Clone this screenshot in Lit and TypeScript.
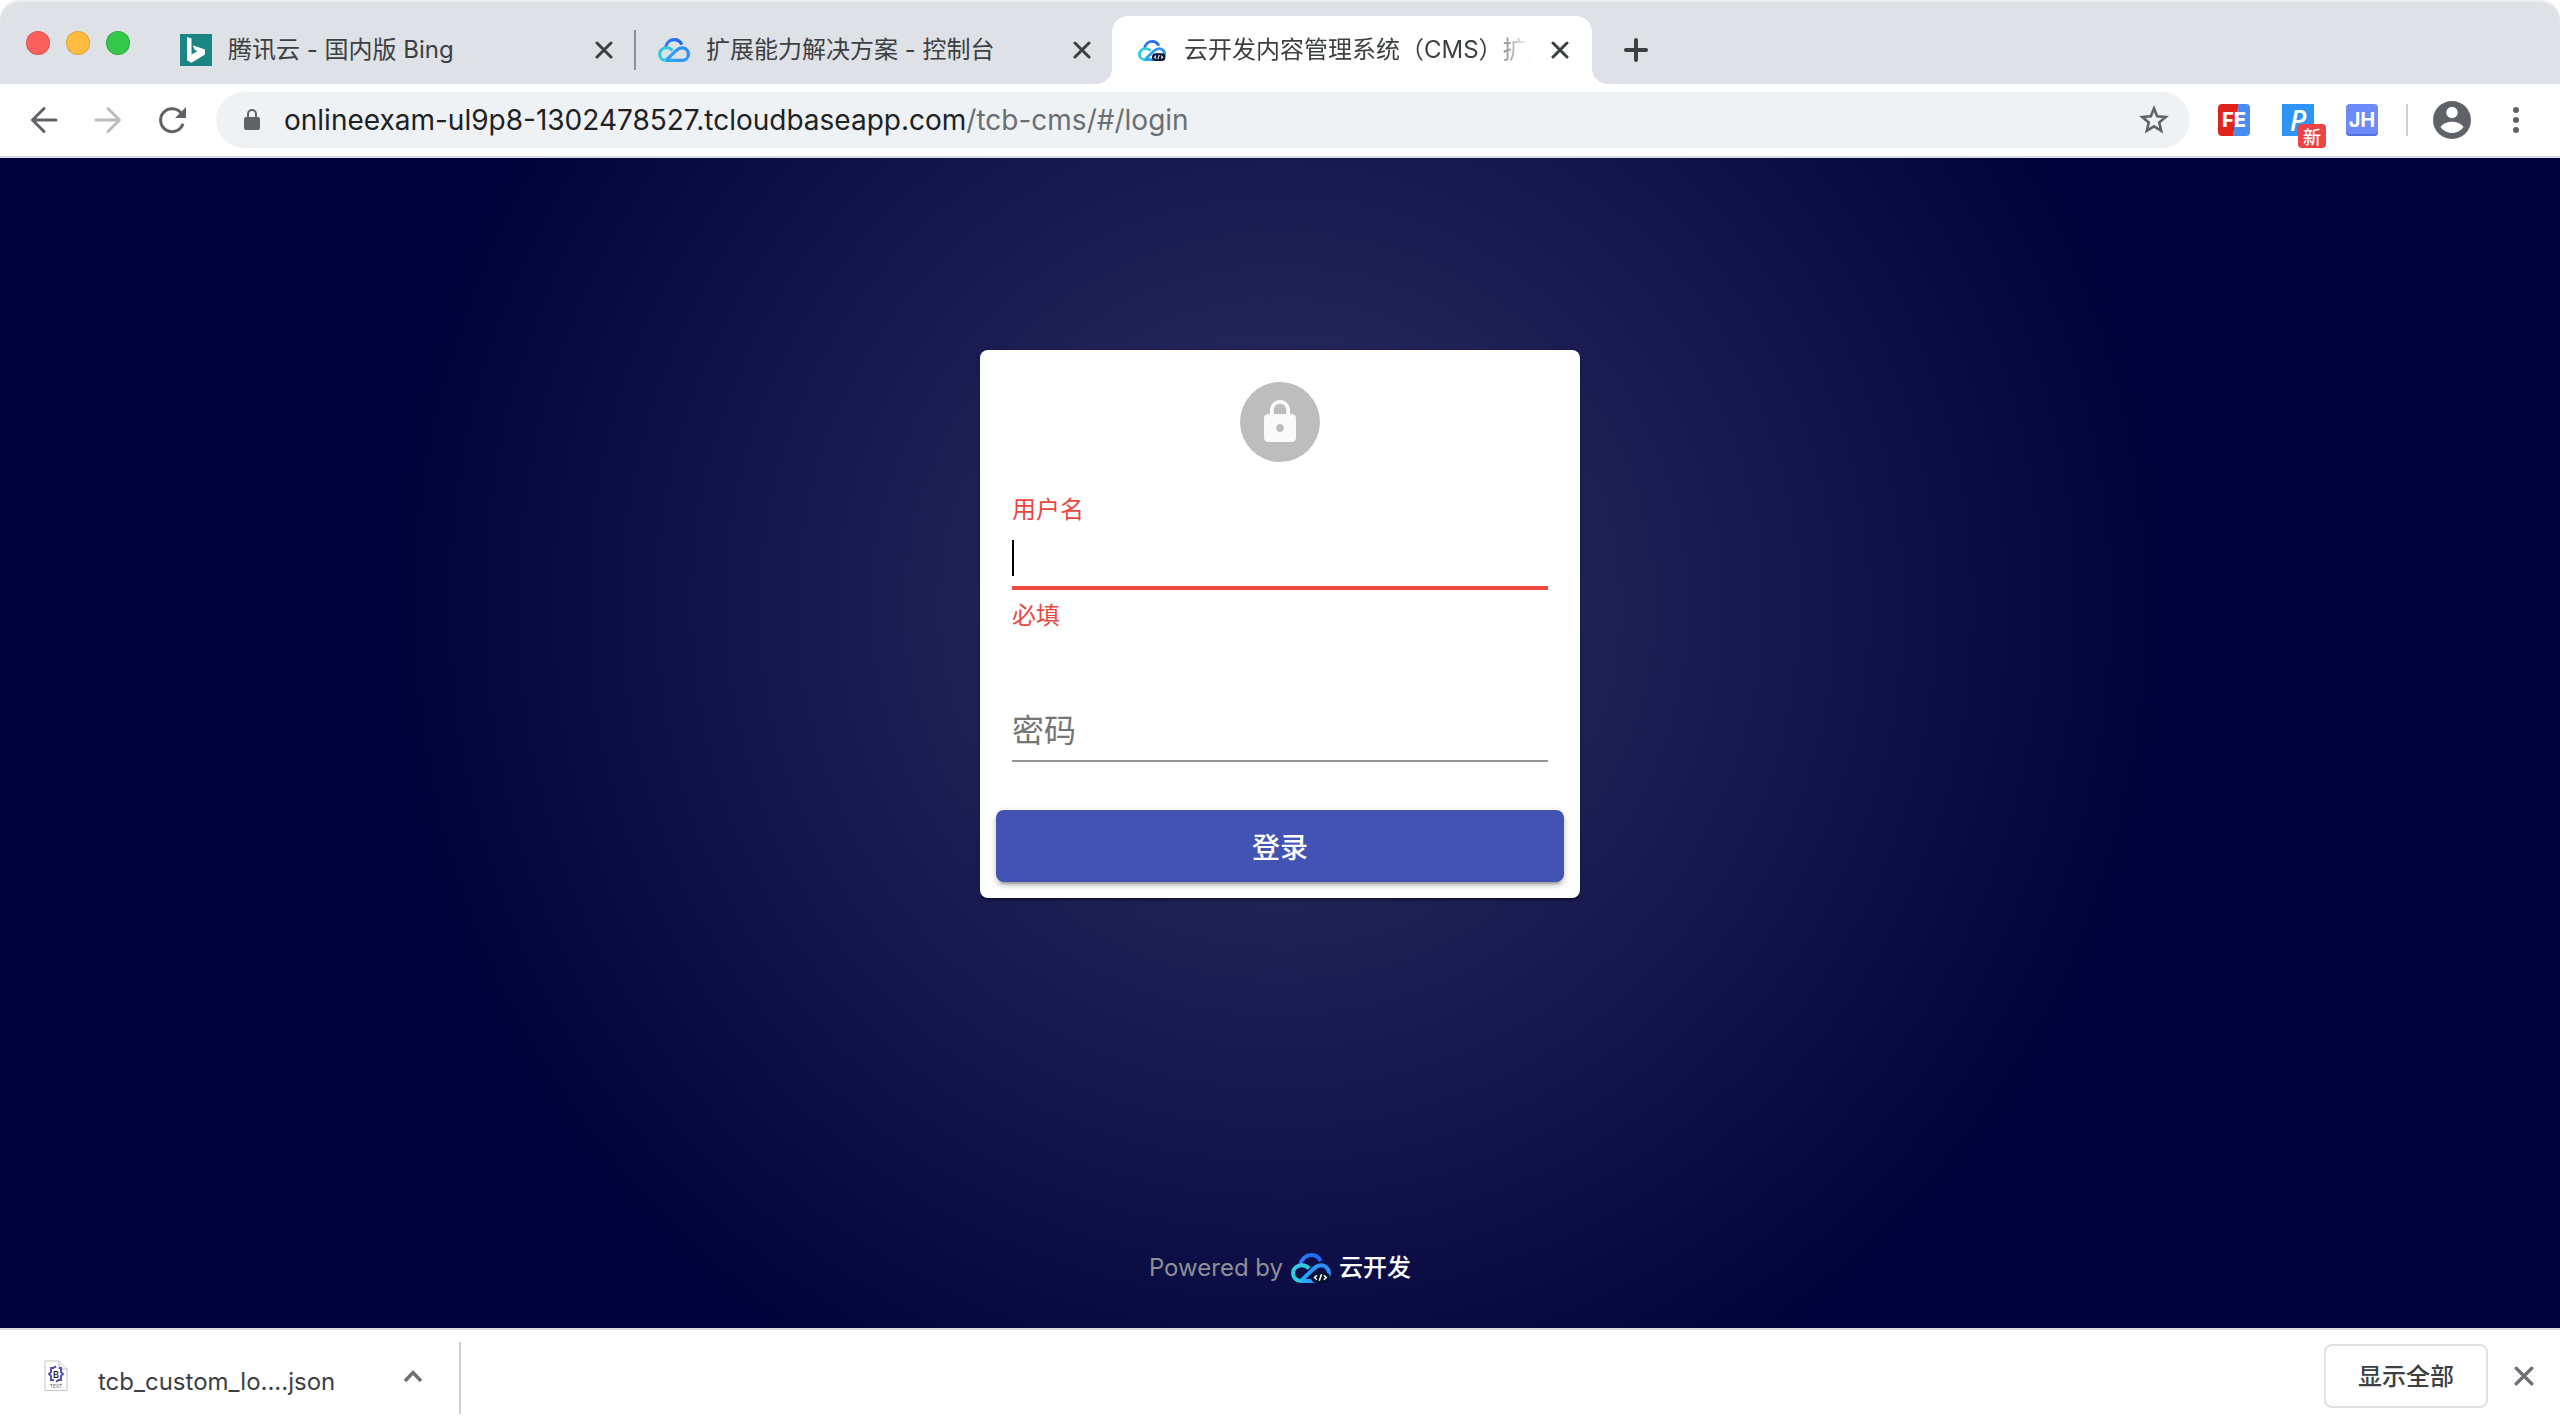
import { LitElement, html, css, svg, nothing } from "lit";
import { customElement, property, state } from "lit/decorators.js";

const cloud = (dev: boolean) => html`<svg viewBox="0 0 40 30" fill="none" aria-hidden="true">
  <defs>
    <linearGradient id="top" x1="8" y1="10" x2="31" y2="10" gradientUnits="userSpaceOnUse">
      <stop stop-color="#2f7bf5" /><stop offset="1" stop-color="#1a66f0" />
    </linearGradient>
    <linearGradient id="left" x1="2" y1="14" x2="16" y2="28" gradientUnits="userSpaceOnUse">
      <stop stop-color="#37c8d8" /><stop offset="1" stop-color="#25d3e4" />
    </linearGradient>
    <linearGradient id="right" x1="38" y1="12" x2="14" y2="28" gradientUnits="userSpaceOnUse">
      <stop stop-color="#2f8bf7" /><stop offset="1" stop-color="#2aa5fb" />
    </linearGradient>
  </defs>
  <path d="M9.5 11.5C10.6 5.6 15.2 2 20.3 2C24.600 2 28 4.400 29.800 8.200" stroke="url(#top)" stroke-width="4" />
  <path d="M18.200 15.400C16.200 13.300 13.600 12.200 10.800 12.200C5.800 12.200 2 15.800 2 20.200C2 24.700 5.600 28 10 28H12" stroke="url(#left)" stroke-width="4" />
  <path d="M10 28H30C34.600 28 38 24.600 38 20.300C38 15.800 34.600 12.300 30.200 12.300C27.300 12.300 25.200 13.400 23 15.400L10.500 27.400" stroke="url(#right)" stroke-width="4" />
  ${dev
    ? svg`<rect x="20" y="19" width="19" height="11" rx="5.500" fill="#04122e" />
      <path d="M26 22.300L23.500 24.500L26 26.700M30.500 21.300L28.300 27.700M32.800 22.300L35.300 24.500L32.800 26.700" stroke="#fff" stroke-width="1.500" />`
    : nothing}
</svg>`;

const bing = html`<svg viewBox="0 0 32 32" aria-hidden="true">
  <rect width="32" height="32" fill="#1b8583" />
  <path fill="#fff" d="M7 3L11.500 4.600V20.600L17.500 17.200L14.600 15.800L12.800 11.300L25 15.600V20.400L11.500 28.800L7 26.200Z" />
</svg>`;

const cross = html`<svg viewBox="0 0 18 18" aria-hidden="true">
  <path d="M2 2L16 16M16 2L2 16" fill="none" stroke="currentColor" stroke-width="3" stroke-linecap="round" />
</svg>`;

@customElement("browser-tab")
class BrowserTab extends LitElement {
  @property() label = "";
  @property() icon = "";
  @property({ type: Boolean, reflect: true }) active = false;
  @property({ type: Boolean, reflect: true }) divided = false;

  static styles = css`
    :host {
      display: flex;
      box-sizing: border-box;
      flex: 0 1 478px;
      min-width: 0;
      height: 68px;
      align-items: center;
      gap: 16px;
      padding: 0 20px 0 24px;
      position: relative;
      color: #3c4043;
    }
    :host([active]) {
      background: #fff;
      border-radius: 16px 16px 0 0;
      flex-basis: 480px;
      padding-right: 22px;
    }
    :host([active])::before,
    :host([active])::after {
      content: "";
      position: absolute;
      bottom: 0;
      width: 16px;
      height: 16px;
    }
    :host([active])::before {
      right: 100%;
      background: radial-gradient(circle at 0 0, transparent 16px, #fff 16px);
    }
    :host([active])::after {
      left: 100%;
      background: radial-gradient(circle at 100% 0, transparent 16px, #fff 16px);
    }
    :host([divided])::after {
      content: "";
      position: absolute;
      left: 100%;
      top: 14px;
      width: 2px;
      height: 40px;
      background: #8d9095;
    }
    .icon {
      display: flex;
      flex: none;
      justify-content: center;
      width: 32px;
    }
    .icon svg {
      width: 100%;
    }
    :host([active]) .icon svg {
      width: 28px;
    }
    .title {
      flex: 1;
      min-width: 0;
      overflow: hidden;
      white-space: nowrap;
      font-size: 24px;
      line-height: 36px;
    }
    :host([active]) .title {
      mask-image: linear-gradient(90deg, #000 calc(100% - 48px), transparent calc(100% - 4px));
    }
    .close {
      display: flex;
      flex: none;
      width: 20px;
      height: 20px;
      padding: 1px;
      border: 0;
      background: none;
      color: inherit;
    }
  `;

  render() {
    return html`
      <span class="icon">${this.icon === "bing" ? bing : cloud(this.icon === "cloud-dev")}</span>
      <span class="title">${this.label}</span>
      <button class="close" aria-label="关闭标签页">${cross}</button>
    `;
  }
}

@customElement("login-card")
class LoginCard extends LitElement {
  @state() private user = "";

  static styles = css`
    :host {
      display: block;
      width: 600px;
      max-width: 100%;
    }
    .card {
      box-sizing: border-box;
      display: flex;
      flex-direction: column;
      padding: 32px 16px 16px;
      background: #fff;
      border-radius: 8px;
      box-shadow: 0 4px 2px -2px #0003, 0 2px 2px #0002, 0 2px 6px #0002;
    }
    .avatar {
      display: flex;
      align-self: center;
      align-items: center;
      justify-content: center;
      width: 80px;
      height: 80px;
      border-radius: 50%;
      background: #bdbdbd;
    }
    .avatar svg {
      width: 48px;
      height: 48px;
      fill: #fafafa;
    }
    .field {
      display: flex;
      flex-direction: column;
      padding: 0 16px;
    }
    .user {
      margin-top: 30px;
      color: #e9473f;
    }
    .label,
    .help {
      font-size: 24px;
      line-height: 36px;
    }
    .help {
      margin: 8px 0 0;
    }
    .input {
      box-sizing: border-box;
      width: 100%;
      height: 58px;
      padding: 0;
      border: 0;
      outline: 0;
      border-radius: 0;
      background: none;
      font: inherit;
      font-size: 32px;
      line-height: 38px;
      color: #212121;
      caret-color: transparent;
    }
    .input::placeholder {
      color: #757575;
      opacity: 1;
    }
    .entry {
      display: flex;
      position: relative;
      border-bottom: 4px solid #ee4a41;
    }
    .caret {
      position: absolute;
      left: 0;
      top: 12px;
      width: 2px;
      height: 36px;
      background: #000;
    }
    .pass {
      margin-top: 66px;
    }
    .pass .input {
      height: 62px;
      border-bottom: 2px solid #949494;
    }
    .submit {
      height: 72px;
      margin-top: 48px;
      border: 0;
      border-radius: 8px;
      background: #4353b3;
      color: #fff;
      font: inherit;
      font-size: 28px;
      font-weight: 500;
      box-shadow: 0 6px 2px -4px #0003, 0 4px 4px #0002, 0 2px 10px #0002;
    }
  `;

  render() {
    return html`<form class="card">
      <span class="avatar">
        <svg viewBox="0 0 24 24" aria-hidden="true">
          <path d="M18 8h-1V6c0-2.760-2.240-5-5-5S7 3.240 7 6v2H6c-1.100 0-2 .9-2 2v10c0 1.100.9 2 2 2h12c1.100 0 2-.9 2-2V10c0-1.100-.9-2-2-2zm-6 9c-1.100 0-2-.9-2-2s.9-2 2-2 2 .9 2 2-.9 2-2 2zm3.100-9H8.900V6c0-1.710 1.390-3.100 3.100-3.100 1.710 0 3.100 1.390 3.100 3.100v2z" />
        </svg>
      </span>
      <div class="field user">
        <label class="label" for="user">用户名</label>
        <div class="entry">
          <input class="input" id="user" type="text" aria-invalid="true" aria-describedby="user-help"
            .value=${this.user} @input=${(e: Event) => (this.user = (e.target as HTMLInputElement).value)} />
          ${this.user ? nothing : html`<span class="caret"></span>`}
        </div>
        <p class="help" id="user-help">必填</p>
      </div>
      <div class="field pass">
        <input class="input" type="password" placeholder="密码" aria-label="密码" />
      </div>
      <button class="submit" type="button">登录</button>
    </form>`;
  }
}

@customElement("app-root")
class AppRoot extends LitElement {
  static styles = css`
    :host {
      display: flex;
      flex-direction: column;
      min-height: 100vh;
      background: #fff;
      font-family: Inter, "Noto Sans CJK SC", sans-serif;
      color: #3c4043;
    }
    button {
      padding: 0;
      border: 0;
      background: none;
      font: inherit;
      color: inherit;
    }
    svg {
      display: block;
    }
    .strip {
      display: flex;
      align-items: center;
      box-sizing: border-box;
      height: 84px;
      padding: 16px 24px 0;
      background: #dee1e6;
      border-radius: 20px 20px 0 0;
      box-shadow: inset 0 2px #eceef1;
    }
    .lights {
      display: flex;
      flex: none;
      gap: 16px;
      width: 130px;
      padding: 0 0 14px 2px;
    }
    .light {
      width: 24px;
      height: 24px;
      border-radius: 50%;
      box-shadow: inset 0 0 0 1px #0002;
    }
    .red { background: #fc605c; }
    .amber { background: #fdbc40; }
    .green { background: #34c84a; }
    .add {
      width: 24px;
      height: 24px;
      margin-left: 32px;
    }
    .bar {
      display: flex;
      align-items: center;
      box-sizing: border-box;
      height: 74px;
      padding: 0 32px 0 28px;
      border-bottom: 2px solid #d8dbe0;
    }
    .nav {
      display: flex;
      flex: none;
      gap: 32px;
      margin-right: 28px;
      color: #5f6368;
    }
    .nav svg { width: 32px; height: 32px; }
    .dim { color: #babcbe; }
    .omni {
      display: flex;
      flex: 1;
      min-width: 0;
      align-items: center;
      box-sizing: border-box;
      height: 56px;
      padding: 0 20px 0 28px;
      border-radius: 28px;
      background: #eef2f4;
    }
    .lock { width: 16px; height: 22px; margin-right: 24px; }
    .url {
      flex: 1;
      overflow: hidden;
      white-space: nowrap;
      font-size: 28px;
      line-height: 40px;
      color: #202124;
    }
    .path { color: #6b6e72; }
    .star { width: 32px; height: 32px; }
    .tools {
      display: flex;
      flex: none;
      align-items: center;
      gap: 32px;
      margin-left: 28px;
    }
    .ext {
      display: block;
      position: relative;
      width: 32px;
      height: 32px;
      border-radius: 4px;
      font-size: 20px;
      font-weight: 800;
      line-height: 32px;
      text-align: center;
      color: #fff;
    }
    .fe { background: linear-gradient(100deg, #e2231a 54%, #4a8cf0 54%); }
    .pp {
      border-radius: 0;
      background: #2e94f5;
      font-family: "Open Sans", sans-serif;
      font-style: italic;
      font-weight: 600;
      font-size: 28px;
    }
    .jh {
      background: #6d8bf8;
      box-shadow: inset 0 -2px #5471dd;
      font-size: 20px;
      font-weight: 700;
    }
    .badge {
      position: absolute;
      left: 16px;
      top: 20px;
      width: 28px;
      height: 24px;
      border-radius: 4px;
      background: #ee4344;
      font-family: "Noto Sans CJK SC", sans-serif;
      font-style: normal;
      font-size: 18px;
      font-weight: 500;
      line-height: 24px;
    }
    .rule { width: 2px; height: 32px; margin: 0 -8px 0 -4px; background: #cfcfcf; }
    .who { width: 40px; height: 40px; }
    .menu { width: 32px; height: 32px; margin: 0 -4px; }
    .page {
      display: flex;
      flex: 1;
      flex-direction: column;
      align-items: center;
      justify-content: space-between;
      padding: 192px 32px 42px;
      background: radial-gradient(circle at 50% 448px, #313264 0%, #00023b 60%);
    }
    .foot {
      display: flex;
      align-items: center;
      gap: 8px;
      font-size: 24px;
      line-height: 36px;
      color: #8f8f96;
    }
    .foot svg { width: 40px; height: 30px; }
    .brand { color: #fff; font-weight: 500; text-decoration: none; }
    .shelf {
      display: flex;
      align-items: center;
      box-sizing: border-box;
      height: 98px;
      padding: 0 26px 0 44px;
      border-top: 2px solid #d8dbe0;
    }
    .file {
      display: flex;
      align-items: center;
      box-sizing: border-box;
      width: 417px;
      height: 72px;
      padding: 0 36px 4px 0;
      border-right: 2px solid #cdcdcd;
    }
    .doc { flex: none; width: 24px; height: 32px; margin-right: 30px; }
    .name {
      flex: 1;
      padding-top: 12px;
      font-size: 24px;
      line-height: 32px;
      white-space: nowrap;
      text-align: left;
    }
    .up { width: 20px; height: 14px; }
    .actions {
      display: flex;
      align-items: center;
      gap: 26px;
      margin-left: auto;
      padding-bottom: 4px;
    }
    .all {
      box-sizing: border-box;
      width: 164px;
      height: 64px;
      padding-bottom: 4px;
      border: 2px solid #dfe0e2;
      border-radius: 8px;
      font-size: 24px;
      font-weight: 500;
    }
    .hide { width: 20px; height: 20px; color: #6e7175; }
  `;

  render() {
    return html`
      <nav class="strip">
        <div class="lights">
          <button class="light red" aria-label="关闭"></button>
          <button class="light amber" aria-label="最小化"></button>
          <button class="light green" aria-label="缩放"></button>
        </div>
        <browser-tab divided icon="bing" label="腾讯云 - 国内版 Bing"></browser-tab>
        <browser-tab icon="cloud" label="扩展能力解决方案 - 控制台"></browser-tab>
        <browser-tab active icon="cloud-dev" label="云开发内容管理系统（CMS）扩展"></browser-tab>
        <button class="add" aria-label="新标签页">
          <svg viewBox="0 0 24 24"><path d="M12 2V22M2 12H22" stroke="#3c4043" stroke-width="4" stroke-linecap="round" /></svg>
        </button>
      </nav>
      <header class="bar">
        <div class="nav">
          <button aria-label="后退">
            <svg viewBox="0 0 32 32" fill="none" stroke="currentColor" stroke-width="3" stroke-linecap="round" stroke-linejoin="round"><path d="M28 16H5M16 4.500L4.500 16L16 27.500" /></svg>
          </button>
          <button class="dim" aria-label="前进">
            <svg viewBox="0 0 32 32" fill="none" stroke="currentColor" stroke-width="3" stroke-linecap="round" stroke-linejoin="round"><path d="M4 16H27M16 4.500L27.500 16L16 27.500" /></svg>
          </button>
          <button aria-label="重新加载">
            <svg viewBox="0 0 32 32" fill="none"><path d="M25.300 9.300A11.500 11.500 0 1 0 27 19.800" stroke="currentColor" stroke-width="3" /><path d="M30 3V14H19Z" fill="currentColor" /></svg>
          </button>
        </div>
        <div class="omni">
          <svg class="lock" viewBox="0 0 16 22" aria-hidden="true"><rect y="8" width="16" height="13" rx="2" fill="#5f6368" /><path d="M4 9V5A4 4 0 0 1 12 5V9" fill="none" stroke="#5f6368" stroke-width="2" /></svg>
          <span class="url">onlineexam-ul9p8-1302478527.tcloudbaseapp.com<span class="path">/tcb-cms/#/login</span></span>
          <button aria-label="添加书签">
            <svg class="star" viewBox="0 0 32 32"><path d="M16 4.500L19.200 12.300L27.700 13L21.200 18.500L23.200 26.800L16 22.300L8.800 26.800L10.800 18.500L4.300 13L12.800 12.300Z" fill="none" stroke="#5f6368" stroke-width="2.600" /></svg>
          </button>
        </div>
        <div class="tools">
          <button class="ext fe">FE</button>
          <button class="ext pp">P<span class="badge">新</span></button>
          <button class="ext jh">JH</button>
          <span class="rule"></span>
          <button aria-label="用户">
            <svg class="who" viewBox="0 0 40 40"><circle cx="20" cy="20" r="19" fill="#5f6368" /><circle cx="20" cy="12.500" r="5.700" fill="#fff" /><path d="M8.500 27C10.500 23.500 16 21.700 20 21.700S29.500 23.500 31.500 27C29 30.800 24.500 33 20 33S11 30.800 8.500 27Z" fill="#fff" /></svg>
          </button>
          <button aria-label="菜单">
            <svg class="menu" viewBox="0 0 32 32" fill="#5f6368"><circle cx="16" cy="6" r="3" /><circle cx="16" cy="16" r="3" /><circle cx="16" cy="26" r="3" /></svg>
          </button>
        </div>
      </header>
      <main class="page">
        <login-card></login-card>
        <footer class="foot">
          <span>Powered by</span>
          ${cloud(true)}
          <a class="brand" href="#cloudbase">云开发</a>
        </footer>
      </main>
      <section class="shelf" aria-label="下载">
        <div class="file">
          <svg class="doc" viewBox="0 0 24 32" aria-hidden="true">
            <path d="M1 1H15L23 9V30.500H1Z" fill="#fff" stroke="#c4c4c4" />
            <path d="M15 1V9H23" fill="#f4f4f4" stroke="#c4c4c4" />
            <path d="M9 8H7V12L5 14L7 16V20H10M15 8H17V12L19 14L17 16V20H14M9 8L12 6.500M12 21.500L15 20" fill="none" stroke="#5b50b8" stroke-width="2" />
            <text x="12" y="17.500" text-anchor="middle" font-size="9" font-weight="600" fill="#222">B</text>
            <text x="12" y="28" text-anchor="middle" font-size="5" fill="#666">TEXT</text>
          </svg>
          <button class="name">tcb_custom_lo....json</button>
          <button aria-label="更多选项">
            <svg class="up" viewBox="0 0 20 14"><path d="M2 12L10 3.500L18 12" fill="none" stroke="#6e7175" stroke-width="3.500" /></svg>
          </button>
        </div>
        <div class="actions">
          <button class="all">显示全部</button>
          <button class="hide" aria-label="关闭下载栏">${cross}</button>
        </div>
      </section>
    `;
  }
}
